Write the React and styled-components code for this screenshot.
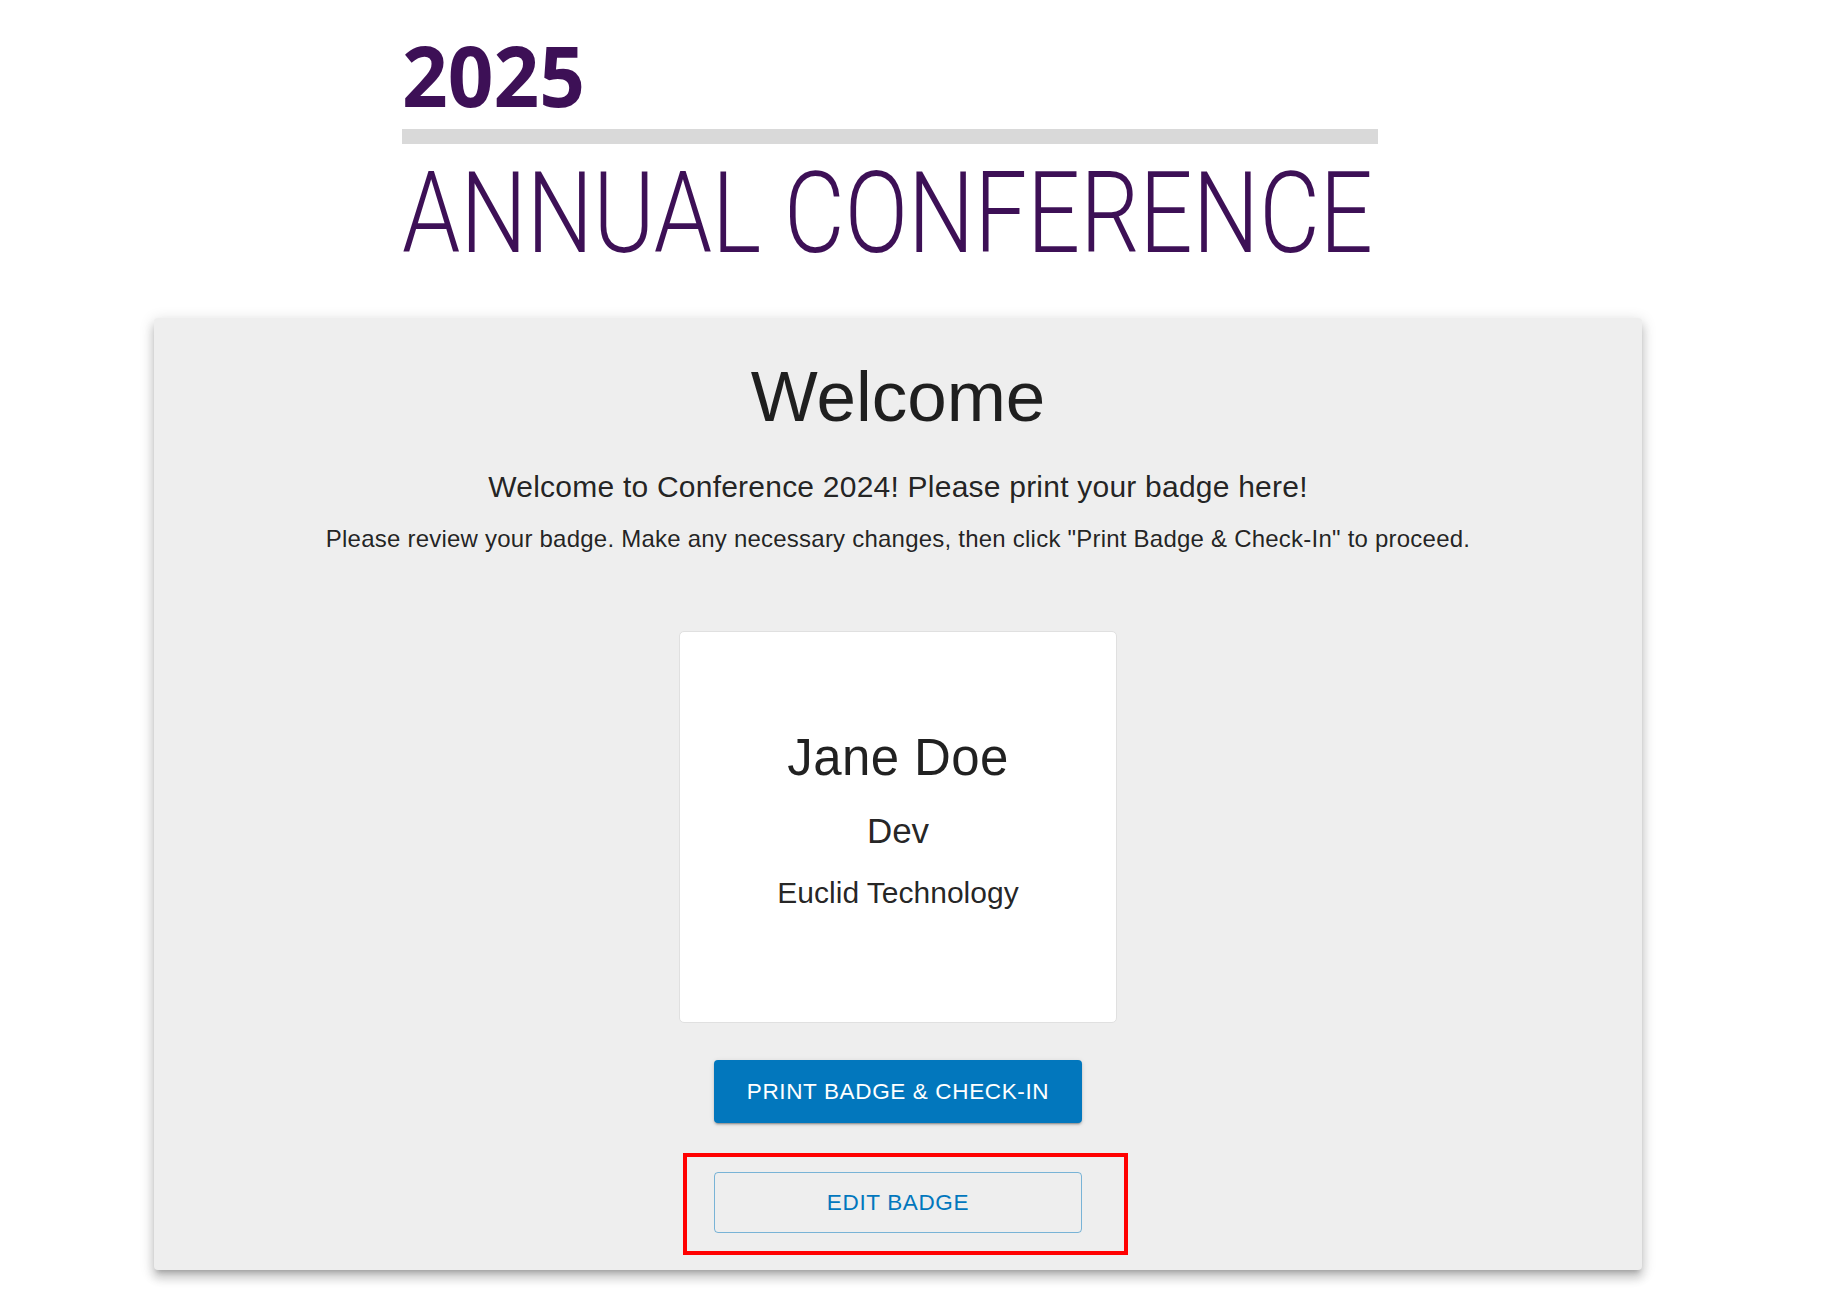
import React from 'react';
import styled, { createGlobalStyle } from 'styled-components';


const GlobalStyle = createGlobalStyle`
  html, body {
    margin: 0;
    padding: 0;
    background: #ffffff;
  }
  body {
    font-family: "Liberation Sans", Arial, sans-serif;
    color: rgba(0, 0, 0, 0.87);
  }
`;

const StyledPage = styled.main`
  display: flex;
  flex-direction: column;
  align-items: flex-start;
  width: 1839px;
  min-height: 1301px;
  padding-top: 40px;
  box-sizing: border-box;
`;

const StyledLogo = styled.svg`
  display: block;
  margin-left: 400px;
  overflow: visible;
`;

const StyledPanel = styled.section`
  display: flex;
  flex-direction: column;
  align-items: center;
  box-sizing: border-box;
  width: 1488px;
  margin: 48px 0 0 154px;
  padding: 37px 0 37px 0;
  background: #eeeeee;
  border-radius: 4px;
  box-shadow:
    0px 5px 5px -3px rgba(0, 0, 0, 0.2),
    0px 8px 10px 1px rgba(0, 0, 0, 0.14),
    0px 3px 14px 2px rgba(0, 0, 0, 0.12);
`;

const StyledHeading = styled.h1`
  margin: 0;
  font-size: 71px;
  font-weight: 400;
  line-height: 84px;
  text-align: center;
`;

const StyledSubtitle = styled.h2`
  margin: 24px 0 0 0;
  font-size: 30px;
  font-weight: 400;
  line-height: 48px;
  letter-spacing: 0.0075em;
  text-align: center;
`;

const StyledInstructions = styled.p`
  margin: 10px 0 0 0;
  font-size: 24px;
  line-height: 36px;
  letter-spacing: 0.00938em;
  text-align: center;
`;

const StyledBadge = styled.div`
  display: flex;
  flex-direction: column;
  align-items: center;
  box-sizing: border-box;
  width: 438px;
  height: 392px;
  margin-top: 74px;
  padding-top: 94px;
  background: #ffffff;
  border: 1px solid #e0e0e0;
  border-radius: 5px;
`;

const BadgeLine = styled.div`
  font-size: ${(props) => props.size}px;
  line-height: ${(props) => props.lineHeight}px;
  margin-top: ${(props) => props.gap || 0}px;
  letter-spacing: ${(props) => props.spacing || 0};
  white-space: nowrap;
`;

const StyledButton = styled.button`
  display: flex;
  align-items: center;
  justify-content: center;
  box-sizing: border-box;
  width: 368px;
  height: ${(props) => (props.outlined ? 61 : 63)}px;
  margin-top: ${(props) => props.gap}px;
  padding: 0;
  font-family: "Liberation Sans", Arial, sans-serif;
  font-size: 22.5px;
  letter-spacing: 0.02857em;
  text-transform: uppercase;
  border-radius: 4px;
  cursor: pointer;
  color: ${(props) => (props.outlined ? '#0277bd' : '#ffffff')};
  background: ${(props) => (props.outlined ? 'transparent' : '#0277bd')};
  border: ${(props) => (props.outlined ? '1px solid rgba(2, 119, 189, 0.5)' : 'none')};
  box-shadow: ${(props) => (props.outlined
    ? 'none'
    : '0px 3px 1px -2px rgba(0,0,0,0.2), 0px 2px 2px 0px rgba(0,0,0,0.14), 0px 1px 5px 0px rgba(0,0,0,0.12)')};
`;

const StyledEditWrap = styled.div`
  position: relative;
  margin-top: 49px;
`;

// red highlight box drawn over the screenshot around the edit button
const StyledHighlight = styled.div`
  position: absolute;
  top: -19px;
  left: -31px;
  right: -46px;
  bottom: -22px;
  border: 4px solid #ff0000;
  pointer-events: none;
`;

const Logo = () => (
  <StyledLogo width="980" height="230" viewBox="0 0 980 230">
    <text
      x="2"
      y="67"
      fontFamily="'Open Sans', 'Noto Sans', sans-serif"
      fontWeight="700"
      fontSize="85"
      fill="#3d1056"
      textLength="183"
      lengthAdjust="spacingAndGlyphs"
    >
      2025
    </text>
    <rect x="2" y="89" width="976" height="15" fill="#d9d9d9" />
    <text
      x="2"
      y="212"
      fontFamily="Roboto, 'Open Sans', sans-serif"
      fontWeight="300"
      fontSize="114"
      fill="#3d1056"
      textLength="971"
      lengthAdjust="spacingAndGlyphs"
    >
      ANNUAL CONFERENCE
    </text>
  </StyledLogo>
);

const badge = {
  name: 'Jane Doe',
  title: 'Dev',
  company: 'Euclid Technology',
};

const App = () => {
  return (
    <>
      <GlobalStyle />
      <StyledPage>
        <Logo />
        <StyledPanel>
          <StyledHeading>Welcome</StyledHeading>
          <StyledSubtitle>Welcome to Conference 2024! Please print your badge here!</StyledSubtitle>
          <StyledInstructions>
            Please review your badge. Make any necessary changes, then click "Print Badge &amp; Check-In" to proceed.
          </StyledInstructions>
          <StyledBadge>
            <BadgeLine size={51} lineHeight={63} spacing="0.00735em">{badge.name}</BadgeLine>
            <BadgeLine size={35} lineHeight={47} gap={18}>{badge.title}</BadgeLine>
            <BadgeLine size={30} lineHeight={48} gap={15}>{badge.company}</BadgeLine>
          </StyledBadge>
          <StyledButton gap={37}>Print Badge &amp; Check-In</StyledButton>
          <StyledEditWrap>
            <StyledButton outlined gap={0}>Edit Badge</StyledButton>
            <StyledHighlight />
          </StyledEditWrap>
        </StyledPanel>
      </StyledPage>
    </>
  );
};

export default App;
